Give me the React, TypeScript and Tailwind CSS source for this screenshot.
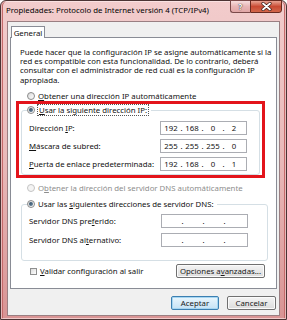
import React from "react";

const U = ({ children }: { children: React.ReactNode }) => (
  <span className="underline decoration-[0.5px] underline-offset-[1px]">{children}</span>
);

function Radio({ checked, disabled }: { checked?: boolean; disabled?: boolean }) {
  return (
    <div
      className={
        "w-[8px] h-[8px] rounded-full border flex items-center justify-center shrink-0 " +
        (disabled
          ? "border-[#c4c4c4] bg-[#f4f4f4]"
          : "border-[#8a8a8a] bg-gradient-to-br from-[#d9d9d9] to-[#ffffff]")
      }
    >
      {checked && <div className="w-[4px] h-[4px] rounded-full bg-gradient-to-br from-[#2d4a62] to-[#6d8aa2]" />}
    </div>
  );
}

function IpBox({ vals }: { vals: string[] }) {
  return (
    <div className="w-[87px] h-[14px] border border-[#abadb3] bg-white flex items-center pl-[1px] shrink-0">
      {vals.map((v, i) => (
        <React.Fragment key={i}>
          <span className="w-[18px] text-center">{v}</span>
          {i < 3 && <span className="w-[3px] text-center">.</span>}
        </React.Fragment>
      ))}
    </div>
  );
}

function Btn({ children, w, focus }: { children: React.ReactNode; w: string; focus?: boolean }) {
  return (
    <div
      className={
        w +
        " h-[14px] rounded-[2px] flex items-center justify-center text-[#1a1a1a] " +
        (focus
          ? "border border-[#3c7fb1] bg-gradient-to-b from-[#eaf6fd] to-[#c6e2f5] shadow-[inset_0_0_0_1px_#a6d6f2]"
          : "border border-[#707070] bg-gradient-to-b from-[#f4f4f4] to-[#dcdcdc] shadow-[inset_0_0_0_1px_#fbfbfb]")
      }
    >
      {children}
    </div>
  );
}

export default function App() {
  return (
    <div className="w-[287px] h-[320px] bg-white overflow-hidden font-['Noto_Sans',sans-serif] text-[7.8px] leading-[10px] text-[#111]">
      <div className="w-[287px] h-[320px] rounded-t-[6px] border border-[#4b3434] bg-gradient-to-b from-[#f2cccc] via-[#e9b9b9] to-[#d99494] shadow-[inset_0_0_0_1px_rgba(255,240,240,0.6),inset_2px_0_0_#c56a6a,inset_-2px_0_0_#c56a6a] flex flex-col">
        {/* title bar */}
        <div className="h-[20px] flex items-start shrink-0">
          <div className="pl-[5px] pt-[4px] text-[7.8px] leading-[11px] text-black whitespace-nowrap">
            Propiedades: Protocolo de Internet versión 4 (TCP/IPv4)
          </div>
          <div className="ml-auto mr-[4px] flex">
            <div className="w-[20px] h-[13px] -mt-[1px] rounded-bl-[3px] border border-[#7a4a4a] border-r-0 bg-gradient-to-b from-[#f7dede] via-[#e8b6b6] to-[#e0a6a6] flex items-center justify-center text-white text-[8px] font-bold [text-shadow:0_0_1px_#333,0_0_1px_#333]">
              ?
            </div>
            <div className="w-[32px] h-[13px] -mt-[1px] rounded-br-[3px] border border-[#6a2a20] bg-gradient-to-b from-[#e8a393] via-[#c94a33] to-[#d2664a] flex items-center justify-center">
              <svg width="11" height="9" viewBox="0 0 11 9">
                <path d="M2 1.5 L9 7.5 M9 1.5 L2 7.5" stroke="#3a1a14" strokeWidth="3.2" strokeLinecap="round" />
                <path d="M2 1.5 L9 7.5 M9 1.5 L2 7.5" stroke="#ffffff" strokeWidth="1.8" strokeLinecap="round" />
              </svg>
            </div>
          </div>
        </div>

        {/* client */}
        <div className="mx-[6px] h-[295px] border border-[#9a7f82] bg-[#f0f0f0] flex flex-col shrink-0">
          {/* tab */}
          <div className="relative z-10 ml-[3px] mt-[4px] w-[34px] h-[12px] border border-b-0 border-[#898c95] bg-white flex items-center justify-center">
            General
          </div>
          {/* panel */}
          <div className="-mt-[1px] ml-[2px] w-[267px] h-[252px] border border-[#898c95] bg-white flex flex-col">
            <div className="mt-[9.5px] ml-[9px] leading-[9.4px] whitespace-nowrap">
              Puede hacer que la configuración IP se asigne automáticamente si la
              <br />
              red es compatible con esta funcionalidad. De lo contrario, deberá
              <br />
              consultar con el administrador de red cuál es la configuración IP
              <br />
              apropiada.
            </div>

            <div className="mt-[5.9px] ml-[16px] h-[10px] flex items-center gap-[3px]">
              <Radio />
              <span>
                <U>O</U>btener una dirección IP automáticamente
              </span>
            </div>

            {/* red highlight box */}
            <div className="ml-[5px] w-[249px] h-[77px] border-[3px] border-[#e3141b] flex flex-col shrink-0">
              <div className="ml-[2px] mt-[6px] w-[239px] h-[65px] border border-[#d5dfe5] rounded-[3px] flex flex-col">
                <div className="-mt-[6px] ml-[5px] h-[10px] flex items-center gap-[3px] self-start bg-white pr-[3px]">
                  <Radio checked />
                  <span className="outline-dotted outline-1 outline-[#555] px-[1px]">
                    <U>U</U>sar la siguiente dirección IP:
                  </span>
                </div>
                {[
                  [<>Dirección <U>I</U>P:</>, ["192", "168", "0", "2"]],
                  [<><U>M</U>áscara de subred:</>, ["255", "255", "255", "0"]],
                  [<><U>P</U>uerta de enlace predeterminada:</>, ["192", "168", "0", "1"]],
                ].map(([label, vals], i) => (
                  <div key={i} className={(i === 0 ? "mt-[6px]" : "mt-[4px]") + " ml-[7px] mr-[12px] h-[14px] flex items-center justify-between"}>
                    <span>{label as React.ReactNode}</span>
                    <IpBox vals={vals as string[]} />
                  </div>
                ))}
              </div>
            </div>

            <div className="mt-[5px] ml-[16px] h-[10px] flex items-center gap-[3px] text-[#8d8d8d]">
              <Radio disabled />
              <span>
                O<U>b</U>tener la dirección del servidor DNS automáticamente
              </span>
            </div>

            <div className="mt-[11px] ml-[10px] w-[247px] h-[57px] border border-[#d5dfe5] rounded-[3px] flex flex-col shrink-0">
              <div className="-mt-[6px] ml-[5px] h-[10px] flex items-center gap-[3px] self-start bg-white pr-[3px]">
                <Radio checked />
                <span>
                  Usar las <U>s</U>iguientes direcciones de servidor DNS:
                </span>
              </div>
              <div className="mt-[5px] ml-[7px] mr-[19px] h-[14px] flex items-center justify-between">
                <span>
                  Servidor DNS pre<U>f</U>erido:
                </span>
                <IpBox vals={["", "", "", ""]} />
              </div>
              <div className="mt-[5px] ml-[7px] mr-[19px] h-[14px] flex items-center justify-between">
                <span>
                  Servidor DNS al<U>t</U>ernativo:
                </span>
                <IpBox vals={["", "", "", ""]} />
              </div>
            </div>

            <div className="mt-[3px] ml-[19px] mr-[11px] h-[14px] flex items-center justify-between">
              <div className="flex items-center gap-[3px]">
                <div className="w-[7px] h-[7px] border border-[#8e8f8f] bg-gradient-to-br from-[#dcdcdc] to-[#ffffff]" />
                <span>
                  <U>V</U>alidar configuración al salir
                </span>
              </div>
              <Btn w="w-[89px]">
                Opciones a<U>v</U>anzadas...
              </Btn>
            </div>
          </div>

          {/* dialog buttons */}
          <div className="mt-[7px] mr-[3px] flex justify-end gap-[8px]">
            <Btn w="w-[48px]" focus>
              Aceptar
            </Btn>
            <Btn w="w-[49px]">Cancelar</Btn>
          </div>
        </div>
      </div>
    </div>
  );
}
